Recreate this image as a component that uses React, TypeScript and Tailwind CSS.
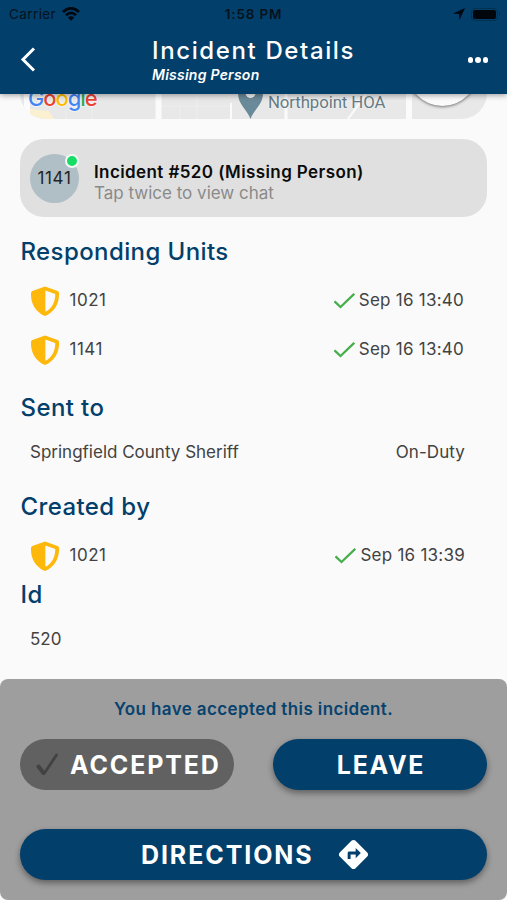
import type { ReactNode } from "react";
import { MdDirections } from "react-icons/md";

function Shield() {
  return (
    <svg className="ml-[31px] h-[30px] w-[28px] shrink-0" viewBox="0 0 28 30">
      <path d="M14 .4 26.6 5Q28 5.6 28 7.2C28.4 16 24.5 25.500 14 30 3.500 25.500-.4 16 0 7.200 0 5.600 1.400 5 1.400 5Z" fill="#feb80c" />
      <path d="M14.400 4.600 24.200 8C24.400 15.500 21 22.500 14.400 25.800Z" fill="#fafafa" />
    </svg>
  );
}

function Heading({ children, className }: { children: ReactNode; className: string }) {
  return (
    <h2 className={`ml-[20.500px] flex h-8 items-center text-[24px] font-medium tracking-[0.4px] text-[#023f6b] ${className}`}>
      {children}
    </h2>
  );
}

function Unit({ id, time, className = "" }: { id: string; time: string; className?: string }) {
  return (
    <div className={`flex h-[49px] items-center text-[17px] text-[#424242] ${className}`}>
      <Shield />
      <span className="ml-[10.500px] pt-px tracking-[0.5px]">{id}</span>
      <svg className="mr-[4px] ml-auto h-[16px] w-[21px]" viewBox="0 0 21 16" fill="none" stroke="#46ae4b" strokeWidth="2.300">
        <path d="M.5 8.300 6.500 14 20.300 .8" />
      </svg>
      <span className="pt-px tracking-[0.25px]">{time}</span>
    </div>
  );
}

function MapStrip() {
  return (
    <div className="relative mx-[20px] h-[26px] shrink-0 overflow-hidden rounded-b-[26px] bg-[#e8e8e8]">
      <svg className="absolute inset-0 h-full w-full" viewBox="0 0 467 26">
        <path d="M10 16 29 18 34 26H10Z" fill="#fbf0cf" />
        <g stroke="#fbfbfb" fill="none">
          <path d="M7 0v26M138.500 0v26M389 0v26" strokeWidth="6" />
          <path d="M266 0v26" strokeWidth="3" />
          <path d="M328 26 347 0M211 10v16" strokeWidth="2" />
          <path d="M46 26V18M72 26V14M142 13h70M160 26V13M177 26V0M268 8h118" strokeWidth=".4" />
        </g>
        <path d="M230.500 26C227 16 218 12 218 0h25c0 12-9 16-12.500 26Z" fill="#6b8a99" />
        <circle cx="230.500" cy="0" r="5" fill="#f3f5f6" />
      </svg>
      <div className="absolute top-[-10px] left-[8px] flex text-[22px] leading-[30px] font-medium tracking-[-1.100px] [text-shadow:0_0_2px_#fff,0_0_2px_#fff]">
        <span className="text-[#4285f4]">G</span>
        <span className="text-[#ea4335]">o</span>
        <span className="text-[#fbbc05]">o</span>
        <span className="text-[#4285f4]">g</span>
        <span className="text-[#34a853]">l</span>
        <span className="text-[#ea4335]">e</span>
      </div>
      <span className="absolute top-[-1.500px] left-[248px] font-[Roboto,sans-serif] text-[16.800px] leading-[20px] tracking-[-0.1px] whitespace-nowrap text-[#667b84] [text-shadow:0_0_2px_#fff]">
        Northpoint HOA
      </span>
      <div className="absolute top-[-58px] left-[387px] size-[71px] rounded-full bg-[#fbfbfb] shadow-[0_1px_3px_rgba(0,0,0,0.5)]" />
    </div>
  );
}

export default function App() {
  return (
    <div className="flex h-[900px] w-[507px] flex-col overflow-hidden bg-[#fafafa] font-[Inter,sans-serif]">
      <header className="relative z-10 h-[93.500px] shrink-0 bg-[#023f6b] shadow-[0_1px_6px_rgba(0,0,0,0.4)]">
        <div className="grid h-[28px] grid-cols-3 items-center text-[13.500px] text-[#06121c]">
          <div className="flex items-center pl-[9px]">
            <span className="tracking-[0.4px]">Carrier</span>
            <svg className="ml-[6px] h-[14px] w-[18px]" viewBox="0 0 18 14" fill="none" stroke="#000810" strokeWidth="2.700">
              <path d="M1 5Q9-2.500 17 5M4 8.300Q9 3.500 14 8.300" />
              <path d="M9 13.800 5.800 10.500Q9 7.800 12.200 10.500Z" fill="#000810" stroke="none" />
            </svg>
          </div>
          <span className="text-center font-semibold tracking-[0.8px]">1:58 PM</span>
          <div className="flex items-center justify-end pr-[7px]">
            <svg className="mr-[6px] h-[12px] w-[12px]" viewBox="0 0 12 12">
              <path d="M12 0 0 5.500 6 6 6.500 12Z" fill="#000810" />
            </svg>
            <div className="h-[13px] w-[27px] rounded-[4px] border border-[#02304f] p-[1px]">
              <div className="h-full rounded-[2px] bg-[#00060c]" />
            </div>
            <div className="ml-[1px] h-[4px] w-[1px] bg-[#02304f]" />
          </div>
        </div>
        <div className="flex h-[65px] items-start text-white">
          <svg className="mt-[19px] ml-[20px] h-[25px] w-[16px] shrink-0" viewBox="0 0 16 25" fill="none" stroke="currentColor" strokeWidth="3">
            <path d="M14 1.500 3 12.500 14 23.500" />
          </svg>
          <div className="ml-[116px] flex-1">
            <h1 className="mt-[8px] text-[24px] leading-[30px] font-medium tracking-[1.620px] whitespace-nowrap">Incident Details</h1>
            <p className="text-[14px] leading-[17px] font-semibold tracking-[0.25px] whitespace-nowrap italic">Missing Person</p>
          </div>
          <div className="mt-[29px] mr-[19px] flex gap-[2px]">
            <span className="size-[5.500px] rounded-full bg-white" />
            <span className="size-[5.500px] rounded-full bg-white" />
            <span className="size-[5.500px] rounded-full bg-white" />
          </div>
        </div>
      </header>

      <main className="mt-[-0.500px] flex min-h-0 flex-1 flex-col">
        <MapStrip />
        <section className="mx-[20px] mt-[20px] flex h-[78px] shrink-0 items-center rounded-[24px] bg-[#e0e0e0]">
          <div className="relative ml-[10px] flex size-[49px] items-center justify-center rounded-full bg-[#b0bec5] pt-[2px] text-[17px] tracking-[0.700px] text-[#1f2427]">
            1141
            <span className="absolute top-0 right-0 size-[14px] rounded-full border-2 border-[#f3f8f5] bg-[#17dc66]" />
          </div>
          <div className="ml-[15px] pt-[9px]">
            <p className="text-[17px] leading-[21px] font-semibold tracking-[0.400px] text-[#0b0b0b]">Incident #520 (Missing Person)</p>
            <p className="text-[17px] leading-[21px] text-[#8a8a8a]">Tap twice to view chat</p>
          </div>
        </section>
        <Heading className="mt-[18.500px]">Responding Units</Heading>
        <div className="mt-[8.500px] mr-[43px]">
          <Unit id="1021" time="Sep 16 13:40" />
          <Unit id="1141" time="Sep 16 13:40" />
        </div>
        <Heading className="mt-[18px]">Sent to</Heading>
        <div className="mt-[4px] mr-[42px] ml-[30px] flex h-[49px] items-center justify-between text-[17px] text-[#424242]">
          <span>Springfield County Sheriff</span>
          <span className="tracking-[0.1px]">On-Duty</span>
        </div>
        <Heading className="mt-[14px]">Created by</Heading>
        <Unit id="1021" time="Sep 16 13:39" className="mt-[8px] mr-[42px]" />
        <Heading className="mt-[-1px]">Id</Heading>
        <div className="mt-[4px] ml-[30px] flex h-[49px] items-center text-[17px] text-[#424242]">520</div>
      </main>

      <footer className="h-[221px] shrink-0 rounded-[8px] bg-[#9e9e9e] px-[20px] pt-[18px]">
        <p className="pt-px text-center text-[17px] leading-[22px] font-semibold tracking-[0.390px] text-[#07436e]">You have accepted this incident.</p>
        <div className="mt-[19px] flex justify-between text-[25px] font-bold text-white">
          <button className="flex h-[51px] w-[214px] items-center rounded-full bg-[#616161] pl-[16px]">
            <svg className="mr-[11px] h-[23px] w-[23px]" viewBox="0 0 23 23" fill="none" stroke="#424242" strokeLinecap="round" strokeLinejoin="round">
              <path d="M2.500 13.500 7.500 20" strokeWidth="4" />
              <path d="M8.500 20 20.500 2" strokeWidth="2.800" />
            </svg>
            <span className="pt-[2px] tracking-[1.850px]">ACCEPTED</span>
          </button>
          <button className="flex h-[51px] w-[214px] items-center justify-center rounded-full bg-[#023f6b] shadow-[0_3px_6px_rgba(0,0,0,0.4)]">
            <span className="pt-[2px] pl-[2px] tracking-[1.700px]">LEAVE</span>
          </button>
        </div>
        <button className="mt-[39px] flex h-[51px] w-full items-center rounded-full bg-[#023f6b] pl-[121px] text-[25px] font-bold text-white shadow-[0_3px_6px_rgba(0,0,0,0.4)]">
          <span className="pt-[2px] tracking-[1.900px]">DIRECTIONS</span>
          <MdDirections className="ml-[22px] size-[35px]" />
        </button>
      </footer>
    </div>
  );
}
